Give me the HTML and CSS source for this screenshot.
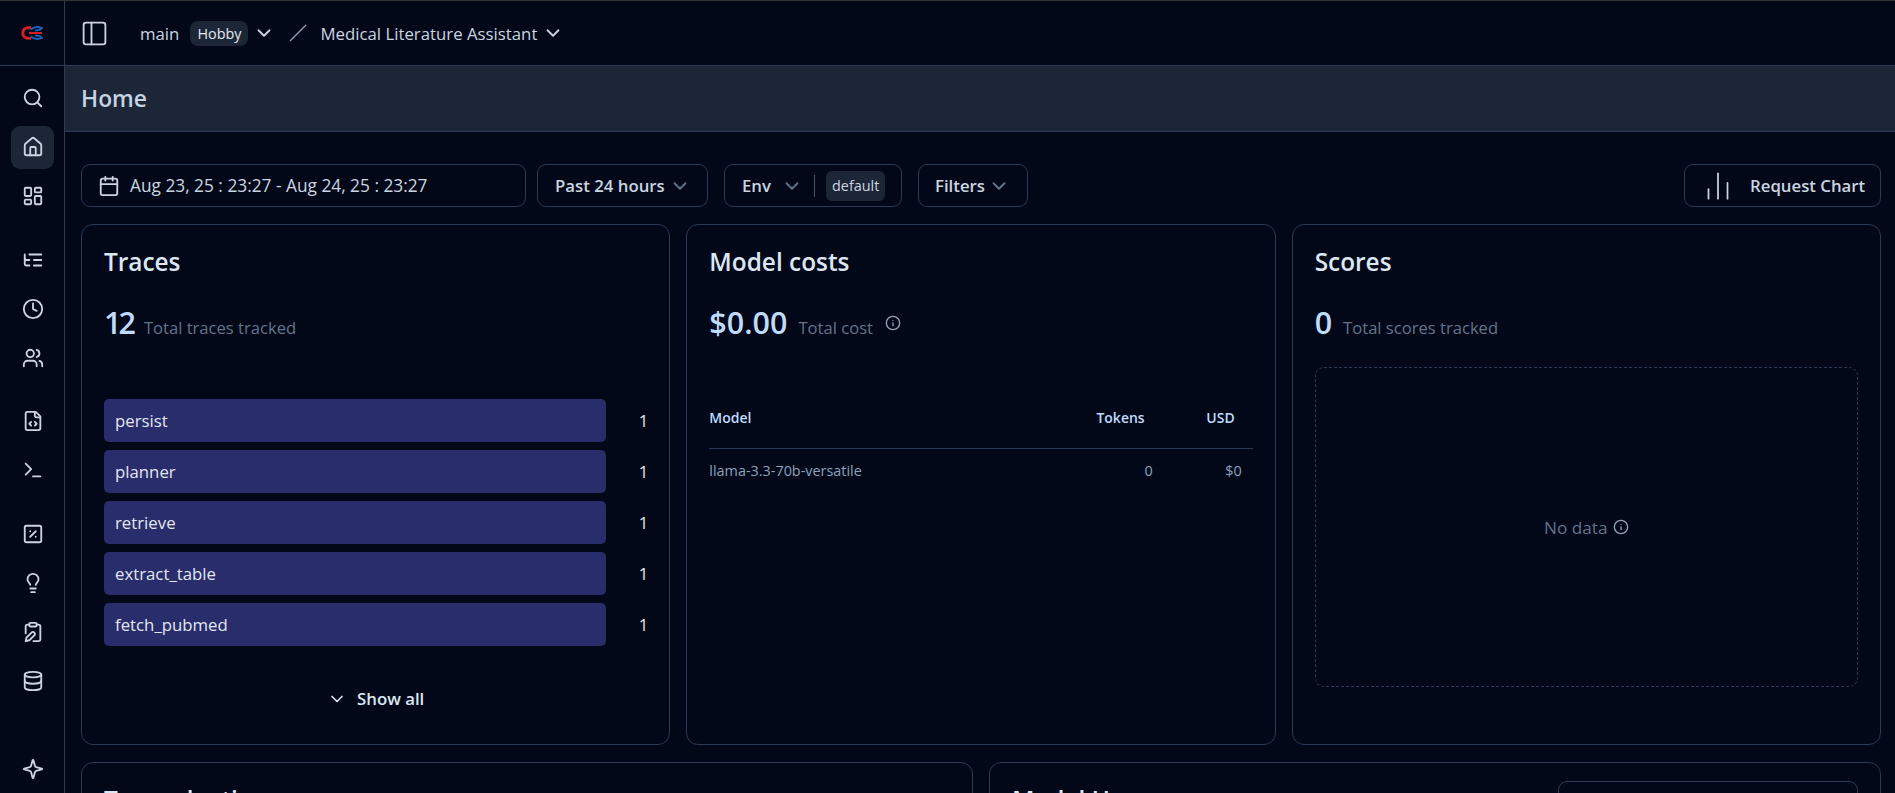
FILE: index.html
```html
<!DOCTYPE html>
<html lang="en">
<head>
    <meta charset="UTF-8">
    <title>Home - Langfuse</title>
    <link rel="stylesheet" href="styles.css">
</head>
<body>
    <svg class="icon-defs" width="0" height="0">
        <symbol id="i-chevron" viewBox="0 0 24 24"><path d="m6 9 6 6 6-6"/></symbol>
        <symbol id="i-info" viewBox="0 0 24 24"><circle cx="12" cy="12" r="10"/><path d="M12 16v-4"/><path d="M12 8h.01"/></symbol>
    </svg>
    <div class="app">
        <aside class="sidebar">
            <div class="logo">
                <svg width="22" height="14" viewBox="0 0 22 14" fill="none">
                    <path d="M10 3.500c3-2.800 7-3 11-1.500-1 1.500-4 2.500-7 2.500" stroke="#1c62b8" stroke-width="1.800"/>
                    <path d="M10 10.500c3 2.800 7 3 11 1.500-1-1.500-4-2.500-7-2.500" stroke="#1c62b8" stroke-width="1.800"/>
                    <path d="M10 1.800H7a5.200 5.200 0 0 0 0 10.400h3" stroke="#d81f26" stroke-width="3"/>
                    <path d="M8 7h13" stroke="#d81f26" stroke-width="2"/>
                </svg>
            </div>
            <nav class="nav">
                <a class="nav-item"><svg class="ic" viewBox="0 0 24 24"><circle cx="11" cy="11" r="8"/><path d="m21 21-4.300-4.300"/></svg></a>
                <a class="nav-item active"><svg class="ic" viewBox="0 0 24 24"><path d="M15 21v-8a1 1 0 0 0-1-1h-4a1 1 0 0 0-1 1v8"/><path d="M3 10a2 2 0 0 1 .709-1.528l7-5.999a2 2 0 0 1 2.582 0l7 5.999A2 2 0 0 1 21 10v9a2 2 0 0 1-2 2H5a2 2 0 0 1-2-2z"/></svg></a>
                <a class="nav-item"><svg class="ic" viewBox="0 0 24 24"><rect x="3" y="3" width="7" height="9" rx="1"/><rect x="14" y="3" width="7" height="5" rx="1"/><rect x="14" y="12" width="7" height="9" rx="1"/><rect x="3" y="16" width="7" height="5" rx="1"/></svg></a>

                <a class="nav-item group-start"><svg class="ic" viewBox="0 0 24 24"><path d="M21 12h-8"/><path d="M21 6H8"/><path d="M21 18h-8"/><path d="M3 6v4c0 1.100.9 2 2 2h3"/><path d="M3 10v6c0 1.100.9 2 2 2h3"/></svg></a>
                <a class="nav-item"><svg class="ic" viewBox="0 0 24 24"><circle cx="12" cy="12" r="10"/><path d="M12 6v6l4 2"/></svg></a>
                <a class="nav-item"><svg class="ic" viewBox="0 0 24 24"><path d="M16 21v-2a4 4 0 0 0-4-4H6a4 4 0 0 0-4 4v2"/><circle cx="9" cy="7" r="4"/><path d="M22 21v-2a4 4 0 0 0-3-3.870"/><path d="M16 3.130a4 4 0 0 1 0 7.750"/></svg></a>

                <a class="nav-item group-start"><svg class="ic" viewBox="0 0 24 24"><path d="M15 2H6a2 2 0 0 0-2 2v16a2 2 0 0 0 2 2h12a2 2 0 0 0 2-2V7Z"/><path d="M14 2v4a2 2 0 0 0 2 2h4"/><path d="m10 13-2 2 2 2"/><path d="m14 17 2-2-2-2"/></svg></a>
                <a class="nav-item"><svg class="ic" viewBox="0 0 24 24"><path d="m4 17 6-6-6-6"/><path d="M12 19h8"/></svg></a>

                <a class="nav-item group-start"><svg class="ic" viewBox="0 0 24 24"><rect x="3" y="3" width="18" height="18" rx="2"/><path d="m15 9-6 6"/><path d="M9 9h.01"/><path d="M15 15h.01"/></svg></a>
                <a class="nav-item"><svg class="ic" viewBox="0 0 24 24"><path d="M15 14c.2-1 .7-1.700 1.500-2.500 1-.9 1.500-2.200 1.500-3.500A6 6 0 0 0 6 8c0 1 .2 2.200 1.500 3.500.7.7 1.300 1.500 1.500 2.500"/><path d="M9 18h6"/><path d="M10 22h4"/></svg></a>
                <a class="nav-item"><svg class="ic" viewBox="0 0 24 24"><rect x="8" y="2" width="8" height="4" rx="1"/><path d="M10.400 12.600a2 2 0 0 1 3 3L8 21l-4 1 1-4Z"/><path d="M16 4h2a2 2 0 0 1 2 2v14a2 2 0 0 1-2 2h-5.500"/><path d="M4 13.500V6a2 2 0 0 1 2-2h2"/></svg></a>
                <a class="nav-item"><svg class="ic" viewBox="0 0 24 24"><ellipse cx="12" cy="5" rx="9" ry="3"/><path d="M3 5V19A9 3 0 0 0 21 19V5"/><path d="M3 12A9 3 0 0 0 21 12"/></svg></a>

                <a class="nav-item nav-bottom"><svg class="ic" viewBox="0 0 24 24"><path d="M9.937 15.500A2 2 0 0 0 8.500 14.063l-6.135-1.582a.5.5 0 0 1 0-.962L8.500 9.936A2 2 0 0 0 9.937 8.500l1.582-6.135a.5.5 0 0 1 .963 0L14.063 8.500A2 2 0 0 0 15.500 9.937l6.135 1.581a.5.5 0 0 1 0 .964L15.500 14.063a2 2 0 0 0-1.437 1.437l-1.582 6.135a.5.5 0 0 1-.963 0z"/></svg></a>
            </nav>
        </aside>

        <div class="content">
            <header class="topbar">
                <svg class="ic panel-icon" viewBox="0 0 24 24"><rect x="3" y="3" width="18" height="18" rx="2"/><path d="M9.500 3v18"/></svg>
                <span class="org">main</span>
                <span class="plan">Hobby</span>
                <svg class="ic chev-top"><use href="#i-chevron"/></svg>
                <svg class="slash" width="18" height="18" viewBox="0 0 18 18"><path d="M1 17 17 1"/></svg>
                <span class="project">Medical Literature Assistant</span>
                <svg class="ic chev-top"><use href="#i-chevron"/></svg>
            </header>

            <div class="title-bar"><h1>Home</h1></div>

            <main class="main">
                <div class="filters">
                    <button class="btn btn-date">
                        <svg class="ic" viewBox="0 0 24 24"><path d="M8 2v4"/><path d="M16 2v4"/><rect x="3" y="4" width="18" height="18" rx="2"/><path d="M3 10h18"/></svg>
                        <span>Aug 23, 25 : 23:27 - Aug 24, 25 : 23:27</span>
                    </button>
                    <button class="btn btn-past">
                        <b>Past 24 hours</b>
                        <svg class="ic chev-dim"><use href="#i-chevron"/></svg>
                    </button>
                    <button class="btn btn-env">
                        <b>Env</b>
                        <svg class="ic chev-dim"><use href="#i-chevron"/></svg>
                        <i class="divider"></i>
                        <span class="env-tag">default</span>
                    </button>
                    <button class="btn btn-filters">
                        <b>Filters</b>
                        <svg class="ic chev-dim"><use href="#i-chevron"/></svg>
                    </button>
                    <button class="btn btn-chart">
                        <svg class="ic" viewBox="0 0 24 24"><path d="M18 20V10"/><path d="M12 20V4"/><path d="M6 20v-6"/></svg>
                        <b>Request Chart</b>
                    </button>
                </div>

                <div class="cards-top">
                    <section class="card">
                        <h2>Traces</h2>
                        <div class="stat"><span class="stat-num tight">12</span><span class="stat-label">Total traces tracked</span></div>
                        <div class="bars">
                            <div class="bar-row"><div class="bar">persist</div><span class="bar-val">1</span></div>
                            <div class="bar-row"><div class="bar">planner</div><span class="bar-val">1</span></div>
                            <div class="bar-row"><div class="bar">retrieve</div><span class="bar-val">1</span></div>
                            <div class="bar-row"><div class="bar">extract_table</div><span class="bar-val">1</span></div>
                            <div class="bar-row"><div class="bar">fetch_pubmed</div><span class="bar-val">1</span></div>
                        </div>
                        <div class="show-all">
                            <svg class="ic"><use href="#i-chevron"/></svg>
                            <b>Show all</b>
                        </div>
                    </section>

                    <section class="card">
                        <h2>Model costs</h2>
                        <div class="stat">
                            <span class="stat-num">$0.00</span><span class="stat-label">Total cost</span>
                            <svg class="ic info-icon"><use href="#i-info"/></svg>
                        </div>
                        <table class="cost-table">
                            <thead>
                                <tr><th>Model</th><th class="num">Tokens</th><th class="num usd">USD</th></tr>
                            </thead>
                            <tbody>
                                <tr><td>llama-3.3-70b-versatile</td><td class="num">0</td><td class="num usd">$0</td></tr>
                            </tbody>
                        </table>
                    </section>

                    <section class="card">
                        <h2>Scores</h2>
                        <div class="stat"><span class="stat-num">0</span><span class="stat-label">Total scores tracked</span></div>
                        <div class="no-data">
                            <span>No data</span>
                            <svg class="ic info-icon"><use href="#i-info"/></svg>
                        </div>
                    </section>
                </div>

                <div class="cards-bottom">
                    <section class="card">
                        <h2>Traces by time</h2>
                    </section>
                    <section class="card card-usage">
                        <h2>Model Usage</h2>
                        <div class="select-box"></div>
                    </section>
                </div>
            </main>
        </div>
    </div>
</body>
</html>
```

FILE: styles.css
```css
* {
    box-sizing: border-box;
}
html, body {
    height: 100%;
    overflow: hidden;
}
body {
    margin: 0;
    background-color: #020817;
    color: #cbd5e1;
    font-family: 'Open Sans', 'Noto Sans', sans-serif;
    font-size: 16px;
    border-top: 1px solid #333;
}
.icon-defs {
    position: absolute;
}
.ic {
    width: 22px;
    height: 22px;
    fill: none;
    stroke: currentColor;
    stroke-width: 2;
    stroke-linecap: round;
    stroke-linejoin: round;
    flex-shrink: 0;
}
.app {
    display: flex;
    height: 100%;
}

/* sidebar */
.sidebar {
    width: 65px;
    flex-shrink: 0;
    border-right: 1px solid #2b3a55;
    display: flex;
    flex-direction: column;
}
.logo {
    height: 65px;
    flex-shrink: 0;
    border-bottom: 1px solid #2b3a55;
    display: flex;
    align-items: center;
    justify-content: center;
}
.nav {
    flex: 1;
    display: flex;
    flex-direction: column;
    align-items: center;
    gap: 6px;
    padding: 10.500px 0 3px;
}
.nav-item {
    width: 43px;
    height: 43px;
    border-radius: 9px;
    padding-left: 1px;
    display: flex;
    align-items: center;
    justify-content: center;
    color: #cbd5e1;
}
.nav-item.active {
    background-color: #1c2636;
}
.group-start {
    margin-top: 14.500px;
}
.nav-bottom {
    margin-top: auto;
}

/* top bar */
.content {
    flex: 1;
    min-width: 0;
    display: flex;
    flex-direction: column;
    overflow: hidden;
}
.topbar {
    height: 65px;
    flex-shrink: 0;
    border-bottom: 1px solid #2b3a55;
    display: flex;
    align-items: center;
    padding-left: 15px;
    font-size: 16.800px;
    color: #cbd5e1;
}
.panel-icon {
    width: 29px;
    height: 29px;
    margin-right: 31px;
    stroke-width: 1.500;
}
.org {
    margin-right: 11px;
}
.plan {
    background-color: #1c2636;
    border-radius: 8px;
    font-size: 14.400px;
    height: 25px;
    padding: 0 7px;
    display: flex;
    align-items: center;
    color: #e2e8f0;
}
.chev-top {
    margin-left: 5px;
    width: 22px;
    height: 22px;
}
.slash {
    margin: 0 13px 0 14px;
    fill: none;
    stroke: #94a3b8;
    stroke-width: 1.300;
}
.title-bar {
    height: 66px;
    flex-shrink: 0;
    background-color: #1c2636;
    border-bottom: 1px solid #2b3a55;
    display: flex;
    align-items: center;
    padding-left: 16px;
}
h1 {
    margin: 0;
    font-size: 22.800px;
    font-weight: 600;
    color: #c6d3e3;
}

/* filters */
.main {
    flex: 1;
    min-height: 0;
    overflow: hidden;
    padding: 32px 14px 0 16px;
}
.filters {
    display: flex;
    align-items: stretch;
    gap: 11px;
    height: 43px;
}
.btn {
    background: transparent;
    border: 1px solid #2b3a55;
    border-radius: 9px;
    color: #cbd5e1;
    font-family: inherit;
    font-size: 16.800px;
    display: flex;
    align-items: center;
    padding: 0;
}
.btn b {
    font-weight: 600;
}
.btn-date {
    width: 445px;
    padding-left: 16px;
    gap: 10px;
    font-size: 17.300px;
}
.btn-past {
    width: 171px;
    padding-left: 17px;
    gap: 4px;
}
.btn-env {
    width: 178px;
    margin-left: 5px;
    padding-left: 17px;
}
.btn-env .chev-dim {
    margin-left: 10px;
}
.chev-dim {
    color: #64748b;
}
.divider {
    width: 1px;
    height: 22px;
    background-color: #475569;
    margin: 0 11px;
}
.env-tag {
    background-color: #1c2636;
    border-radius: 6px;
    font-size: 14.400px;
    height: 30px;
    padding: 0 6px;
    display: flex;
    align-items: center;
}
.btn-filters {
    width: 110px;
    margin-left: 5px;
    padding-left: 16px;
    gap: 3px;
}
.btn-chart {
    width: 197px;
    margin-left: auto;
    padding-left: 14px;
    gap: 13px;
}
.btn-chart .ic {
    width: 38px;
    height: 38px;
    stroke-width: 1.100;
}

/* cards */
.card {
    border: 1px solid #2b3a55;
    border-radius: 12px;
    padding: 18px 22px;
}
h2 {
    margin: 0;
    font-size: 24.400px;
    font-weight: 600;
    line-height: 38px;
    color: #dbe7f5;
}
.cards-top {
    display: grid;
    grid-template-columns: repeat(3, 1fr);
    gap: 16px;
    height: 521px;
    margin-top: 17px;
}
.stat {
    display: flex;
    align-items: baseline;
    margin-top: 19.500px;
    height: 44px;
}
.stat-num {
    font-size: 30.500px;
    font-weight: 600;
    color: #bfdbfe;
}
.stat-num.tight {
    letter-spacing: -3px;
}
.stat-label {
    margin-left: 11px;
    font-size: 16.600px;
    color: #64748b;
}
.info-icon {
    width: 16px;
    height: 16px;
    margin-left: 12px;
    align-self: center;
    color: #94a3b8;
    stroke-width: 2;
}

/* bar list */
.bars {
    margin-top: 54px;
    display: flex;
    flex-direction: column;
    gap: 8px;
}
.bar-row {
    display: flex;
    align-items: center;
}
.bar {
    width: 502px;
    height: 43.200px;
    background-color: #292d6b;
    border-radius: 5px;
    padding-left: 11px;
    display: flex;
    align-items: center;
    font-size: 16.800px;
    color: #e2e8f0;
}
.bar-val {
    margin-left: auto;
    margin-right: -1px;
    font-size: 16.800px;
    color: #e2e8f0;
}
.show-all {
    display: flex;
    align-items: center;
    justify-content: center;
    gap: 10px;
    margin-top: 41px;
    font-size: 16.800px;
    color: #dbe7f5;
}
.show-all b {
    font-weight: 600;
}
.show-all .ic {
    width: 20px;
    height: 20px;
}

/* model costs table */
.cost-table {
    width: 100%;
    margin-top: 43px;
    border-collapse: collapse;
    font-size: 14.400px;
}
.cost-table th,
.cost-table td {
    padding: 0;
}
.cost-table th {
    text-align: left;
    font-size: 14px;
    font-weight: 600;
    height: 61px;
    color: #bfdbfe;
    border-bottom: 1px solid #2b3a55;
}
.cost-table td {
    height: 44px;
    color: #8da2bd;
}
.cost-table th.num {
    text-align: right;
    padding-right: 8px;
}
.cost-table .num {
    text-align: right;
    width: 100px;
}
.cost-table th.usd {
    padding-right: 18px;
}
.cost-table td.usd {
    padding-right: 11px;
}

/* scores empty state */
.no-data {
    margin-top: 22.500px;
    height: 320px;
    border: 1px dashed #2b3a55;
    border-radius: 9px;
    display: flex;
    align-items: center;
    justify-content: center;
    font-size: 17.200px;
    color: #64748b;
}
.no-data .info-icon {
    margin-left: 5px;
}

/* second row, cut by the fold */
.cards-bottom {
    display: grid;
    grid-template-columns: repeat(2, 1fr);
    gap: 16px;
    margin-top: 17px;
    height: 300px;
}
.card-usage {
    display: flex;
    justify-content: space-between;
}
.select-box {
    width: 300px;
    height: 42px;
    border: 1px solid #2b3a55;
    border-radius: 9px;
}
```
